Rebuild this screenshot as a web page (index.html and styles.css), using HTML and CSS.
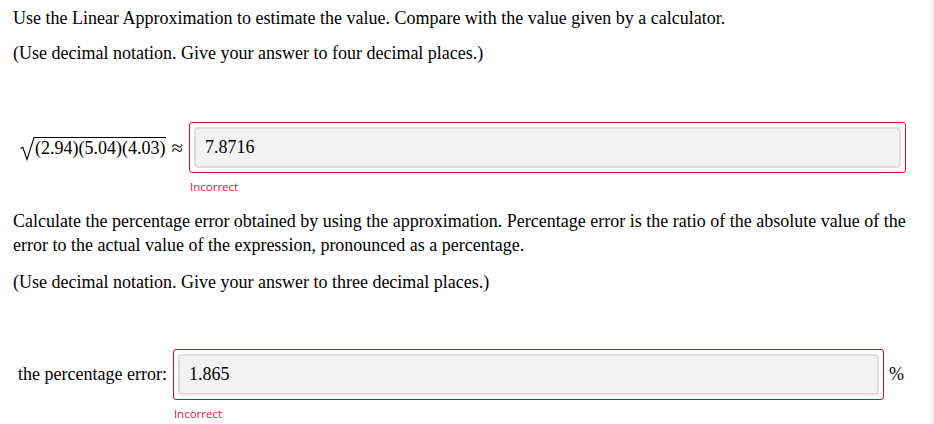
FILE: index.html
```html
<!DOCTYPE html>
<html>
<head>
<meta charset="utf-8">
<link rel="stylesheet" href="styles.css">
</head>
<body>
<div class="page">
  <div class="content">
    <p class="q">Use the Linear Approximation to estimate the value. Compare with the value given by a calculator.</p>
    <p class="q note">(Use decimal notation. Give your answer to four decimal places.)</p>
    <div class="answer-row r1">
      <div class="label math">
        <svg class="rad" width="15" height="24" viewBox="0 0 15 24"><path d="M0.5 11.5 L2.8 10.2 L7 22.5 L14 0.6 L15 0.6" fill="none" stroke="#000" stroke-width="1.1"/></svg><span class="radicand">(2.94)(5.04)(4.03)</span><span class="approx">≈</span>
      </div>
      <div class="field-col">
        <div class="field"><div class="input">7.8716</div></div>
        <div class="feedback">Incorrect</div>
      </div>
    </div>
    <p class="q p3">Calculate the percentage error obtained by using the approximation. Percentage error is the ratio of the absolute value of the error to the actual value of the expression, pronounced as a percentage.</p>
    <p class="q note2">(Use decimal notation. Give your answer to three decimal places.)</p>
    <div class="answer-row r2">
      <div class="label">the percentage error:</div>
      <div class="field-col">
        <div class="field"><div class="input">1.865</div></div>
        <div class="feedback">Incorrect</div>
      </div>
      <div class="unit">%</div>
    </div>
  </div>
</div>
</body>
</html>
```
FILE: styles.css
```css
html, body {
  margin: 0;
  padding: 0;
  background: #fff;
}
body {
  font-family: "Liberation Serif", "Times New Roman", serif;
  font-size: 18px;
  color: #000;
}
.page {
  width: 931px;
  height: 424px;
  border-right: 3px solid #f1f1f1;
  overflow: hidden;
}
.content {
  padding: 6px 18px 0 13px;
}
.q {
  margin: 0;
  line-height: 24px;
}
.note {
  margin-top: 11px;
}
.answer-row {
  display: flex;
  align-items: flex-start;
  margin-right: 7px;
}
.r1 {
  margin-top: 57px;
  padding-left: 7px;
}
.r2 {
  margin-top: 55px;
  padding-left: 5px;
}
.label {
  height: 51px;
  display: flex;
  align-items: center;
  margin-right: 6px;
  white-space: nowrap;
}
.rad {
  display: block;
  align-self: flex-start;
  margin-top: 15px;
}
.radicand {
  border-top: 1px solid #000;
  line-height: 20px;
  padding-right: 1px;
}
.approx {
  margin-left: 5px;
  font-size: 21px;
  line-height: 20px;
}
.field-col {
  flex: 1;
  display: flex;
  flex-direction: column;
}
.field {
  border: 1px solid #c8102e;
  border-radius: 3px;
  padding: 4px;
}
.input {
  height: 37px;
  border: 2px solid #dedede;
  border-radius: 4px;
  background: #f2f2f2;
  padding-left: 9px;
  font-size: 18px;
  line-height: 37px;
}
.feedback {
  font-family: "Open Sans", "Noto Sans", sans-serif;
  font-size: 11.5px;
  line-height: 14px;
  color: #d0213a;
  margin-top: 7px;
  padding-left: 1px;
}
.p3 {
  margin-top: 15px;
}
.note2 {
  margin-top: 13px;
}
.unit {
  height: 51px;
  display: flex;
  align-items: center;
  padding: 0 2px 0 5px;
}
```
